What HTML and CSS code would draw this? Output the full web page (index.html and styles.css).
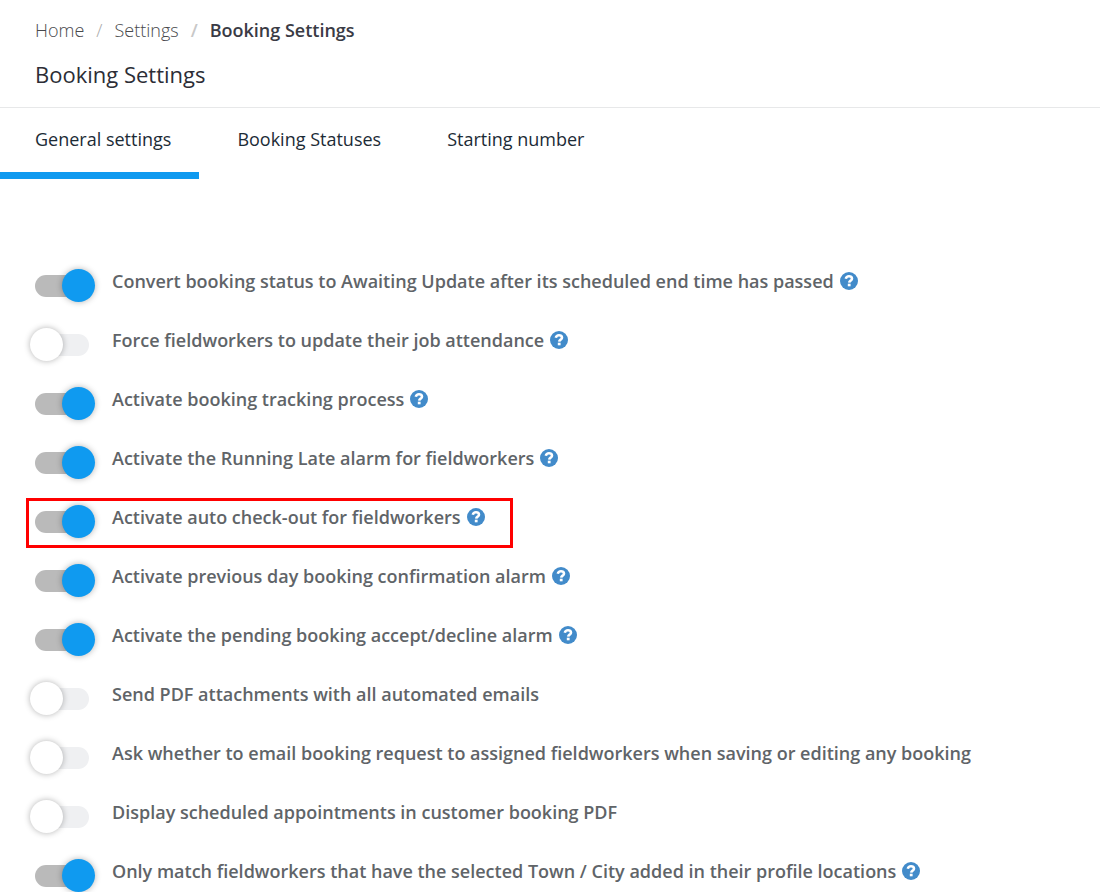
FILE: index.html
```html
<!DOCTYPE html>
<html lang="en">

<head>
    <meta charset="UTF-8">
    <meta name="viewport" content="width=device-width, initial-scale=1.0">
    <title>Booking Settings</title>
    <link rel="stylesheet" href="styles.css">
</head>

<body>
    <!-- help icon, shared by all rows -->
    <svg class="sprite" aria-hidden="true">
        <symbol id="help" viewBox="0 0 18 18">
            <circle cx="9" cy="9" r="9" fill="#428bca" />
            <path d="M5.800 6.700C6.200 5 7.400 4.200 9 4.200c1.800 0 3 .9 3 2.500 0 2-2.700 1.900-2.800 3.900" fill="none" stroke="#fff" stroke-width="2.600" />
            <rect x="7.800" y="11.700" width="2.800" height="2.600" fill="#fff" />
        </symbol>
    </svg>

    <header class="page-header">
        <nav class="breadcrumb" aria-label="Breadcrumb">
            <a href="#">Home</a>
            <span class="sep">/</span>
            <a href="#">Settings</a>
            <span class="sep current-sep">/</span>
            <span class="current">Booking Settings</span>
        </nav>
        <h1>Booking Settings</h1>
    </header>

    <nav class="tabs" aria-label="Settings sections">
        <a href="#" class="tab active">General settings</a>
        <a href="#" class="tab">Booking Statuses</a>
        <a href="#" class="tab">Starting number</a>
    </nav>

    <main class="settings">
        <div class="row">
            <input type="checkbox" class="switch" id="s1" checked>
            <label for="s1">Convert booking status to Awaiting Update after its scheduled end time has passed</label>
            <button type="button" class="help" aria-label="Help"><svg><use href="#help" /></svg></button>
        </div>
        <div class="row">
            <input type="checkbox" class="switch" id="s2">
            <label for="s2">Force fieldworkers to update their job attendance</label>
            <button type="button" class="help" aria-label="Help"><svg><use href="#help" /></svg></button>
        </div>
        <div class="row">
            <input type="checkbox" class="switch" id="s3" checked>
            <label for="s3">Activate booking tracking process</label>
            <button type="button" class="help" aria-label="Help"><svg><use href="#help" /></svg></button>
        </div>
        <div class="row">
            <input type="checkbox" class="switch" id="s4" checked>
            <label for="s4">Activate the Running Late alarm for fieldworkers</label>
            <button type="button" class="help" aria-label="Help"><svg><use href="#help" /></svg></button>
        </div>
        <div class="row highlight">
            <input type="checkbox" class="switch" id="s5" checked>
            <label for="s5">Activate auto check-out for fieldworkers</label>
            <button type="button" class="help" aria-label="Help"><svg><use href="#help" /></svg></button>
        </div>
        <div class="row">
            <input type="checkbox" class="switch" id="s6" checked>
            <label for="s6">Activate previous day booking confirmation alarm</label>
            <button type="button" class="help" aria-label="Help"><svg><use href="#help" /></svg></button>
        </div>
        <div class="row">
            <input type="checkbox" class="switch" id="s7" checked>
            <label for="s7">Activate the pending booking accept/decline alarm</label>
            <button type="button" class="help" aria-label="Help"><svg><use href="#help" /></svg></button>
        </div>
        <div class="row">
            <input type="checkbox" class="switch" id="s8">
            <label for="s8">Send PDF attachments with all automated emails</label>
        </div>
        <div class="row">
            <input type="checkbox" class="switch" id="s9">
            <label for="s9">Ask whether to email booking request to assigned fieldworkers when saving or editing any booking</label>
        </div>
        <div class="row">
            <input type="checkbox" class="switch" id="s10">
            <label for="s10">Display scheduled appointments in customer booking PDF</label>
        </div>
        <div class="row">
            <input type="checkbox" class="switch" id="s11" checked>
            <label for="s11">Only match fieldworkers that have the selected Town / City added in their profile locations</label>
            <button type="button" class="help" aria-label="Help"><svg><use href="#help" /></svg></button>
        </div>
    </main>
</body>

</html>
```
FILE: styles.css
```css
*{margin:0;padding:0;box-sizing:border-box;}
body{background:#fff;color:#606468;font-family:"Open Sans",sans-serif;font-size:18px;line-height:24px;}
a{color:inherit;text-decoration:none;}
.sprite{display:none;}

.page-header{padding:18px 35px;height:108px;border-bottom:1px solid #e7e8e9;}
.breadcrumb{display:flex;gap:12px;color:#48494c;font-weight:300;}
.sep{color:#a8a8a8;}
.current-sep{font-weight:600;color:#c8c8c8;}
.current{color:#3a3b45;font-weight:600;}
h1{margin-top:17px;color:#2c2d36;font-size:22px;line-height:30px;font-weight:400;}

.tabs{display:flex;gap:3px;color:#1c2b36;font-weight:400;}
.tab{padding:19px 28px 21px 35px;border-bottom:7px solid transparent;}
.tab.active{border-bottom-color:#0f9af0;}

.settings{display:flex;flex-direction:column;gap:26px;padding:90px 35px 0;}
.row{display:flex;align-items:center;min-height:33px;position:relative;}
.row label{margin-left:23px;padding-bottom:9px;font-weight:600;}

.switch{appearance:none;flex:none;position:relative;width:54px;height:22px;border-radius:11px;background:#eff0f2;cursor:pointer;}
.switch::before{content:"";position:absolute;top:-6px;left:-5px;width:33px;height:33px;border-radius:50%;background:#fff;box-shadow:0 0 6px rgba(0,0,0,.3);}
.switch:checked{background:#bababa;}
.switch:checked::before{left:27px;background:#0f9af0;}

.help{flex:none;width:18px;height:18px;margin:0 0 9px 6px;border:0;background:none;cursor:pointer;}
.help svg{display:block;width:18px;height:18px;}

/* red frame over the auto check-out row */
.highlight{align-self:flex-start;}
.highlight::after{content:"";position:absolute;top:-7px;bottom:-10px;left:-9px;right:-28px;border:3px solid #f00;pointer-events:none;}
```
